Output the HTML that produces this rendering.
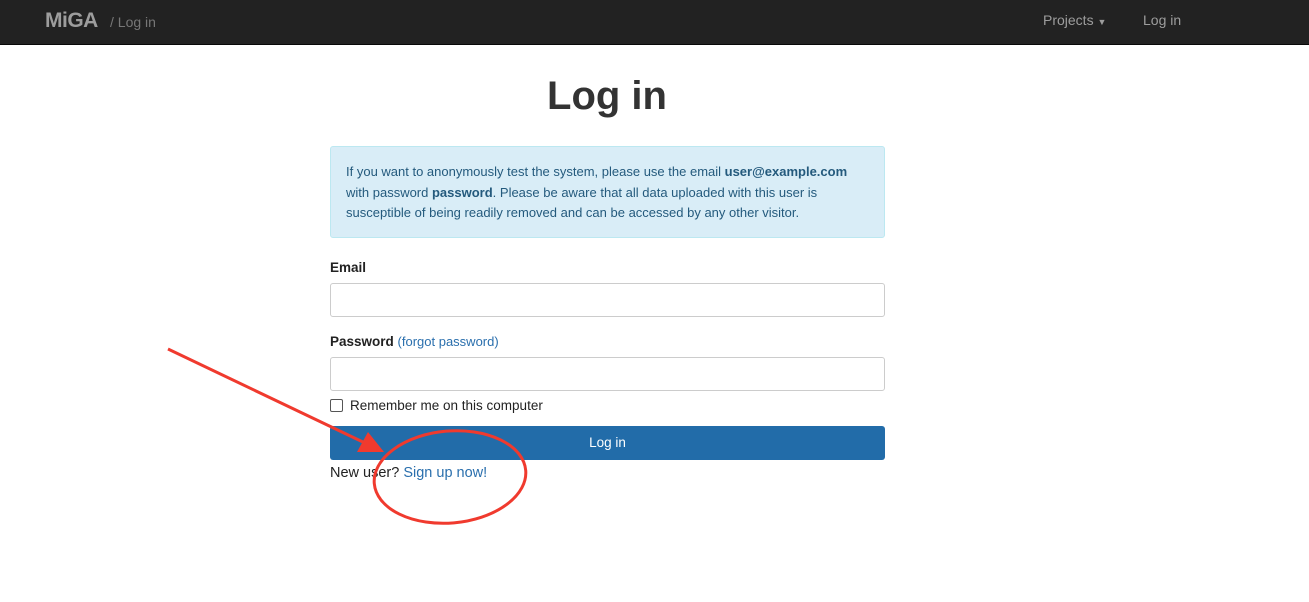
<!DOCTYPE html>
<html><head><meta charset="utf-8"><style>
body{margin:0;width:1309px;height:602px;background:#fff;font-family:"Liberation Sans",sans-serif;position:relative;overflow:hidden;color:#222}
.nav{position:absolute;left:0;top:0;width:1309px;height:44px;background:#222;border-bottom:1px solid #080808}
.brand{position:absolute;left:45px;top:9px;font-size:21px;font-weight:bold;color:#9d9d9d;letter-spacing:-0.5px}
.crumb{position:absolute;left:110px;top:14px;font-size:14px;color:#777}
.nr{position:absolute;top:12px;font-size:14px;color:#9d9d9d}
h1{position:absolute;left:0;width:1214px;text-align:center;top:74px;margin:0;font-size:40px;font-weight:bold;color:#333}
.alert{position:absolute;left:330px;top:146px;width:523px;height:60px;padding:15px;background:#d9edf7;border:1px solid #bce8f1;border-radius:3px;color:#245a7d;font-size:13px;line-height:20.5px}
.lbl{position:absolute;left:330px;font-size:13.5px;font-weight:bold;color:#222}
.inp{position:absolute;left:330px;width:553px;height:32px;border:1px solid #ccc;border-radius:3px}
a{color:#2a6fad;text-decoration:none;font-weight:normal}
.btn{position:absolute;left:330px;top:426px;width:555px;height:34px;background:#226ca9;border-radius:3px;color:#fff;text-align:center;line-height:34px;font-size:13.5px}
</style></head><body>
<div class="nav"><div class="brand">MiGA</div><div class="crumb">/ Log in</div>
<div class="nr" style="left:1043px">Projects <span style="font-size:9px">▼</span></div><div class="nr" style="left:1143px">Log in</div></div>
<h1>Log in</h1>
<div class="alert">If you want to anonymously test the system, please use the email <b>user@example.com</b> with password <b>password</b>. Please be aware that all data uploaded with this user is susceptible of being readily removed and can be accessed by any other visitor.</div>
<div class="lbl" style="top:260px">Email</div>
<div class="inp" style="top:283px"></div>
<div class="lbl" style="top:334px">Password <a style="font-size:13px">(forgot password)</a></div>
<div class="inp" style="top:357px"></div>
<div style="position:absolute;left:330px;top:399px;width:11px;height:11px;border:1px solid #555;border-radius:2px"></div>
<div style="position:absolute;left:350px;top:398px;font-size:13.5px">Remember me on this computer</div>
<div class="btn">Log in</div>
<div style="position:absolute;left:330px;top:465px;font-size:14.5px">New user? <a>Sign up now!</a></div>
<svg width="1309" height="602" style="position:absolute;left:0;top:0">
<line x1="168" y1="349" x2="365" y2="443" stroke="#f03a2e" stroke-width="3"/>
<polygon points="384,452 357,452 368,432" fill="#f03a2e"/>
<ellipse cx="450" cy="477" rx="76" ry="46" fill="none" stroke="#f03a2e" stroke-width="3" transform="rotate(-5 450 477)"/>
</svg>
</body></html>
